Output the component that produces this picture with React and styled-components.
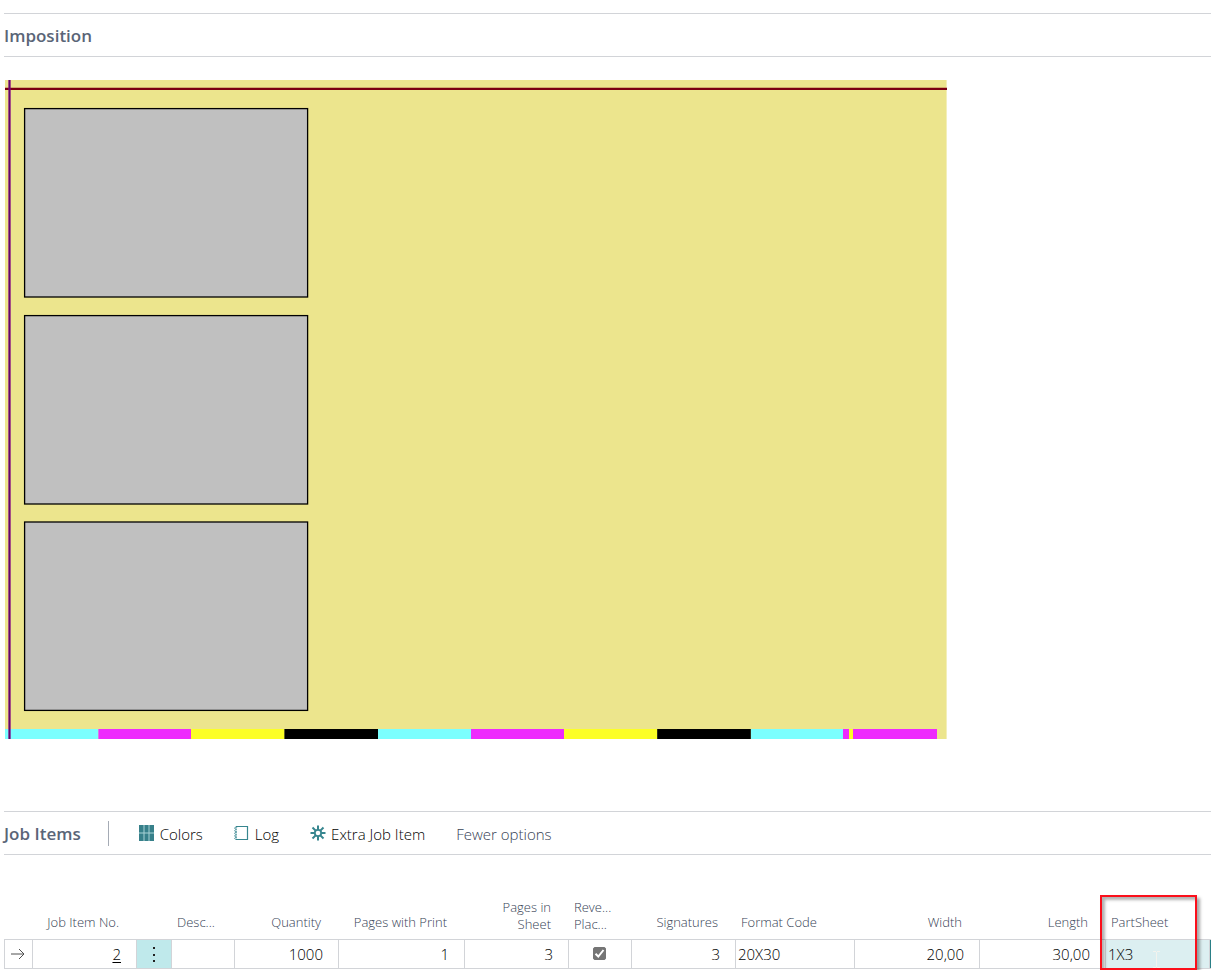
import { useState } from 'react';
import styled, { createGlobalStyle } from 'styled-components';

const GlobalStyle = createGlobalStyle`
  body {
    margin: 0;
    background-color: #ffffff;
    color: #000000;
    font-family: 'Segoe UI', 'Open Sans', 'Noto Sans', sans-serif;
    font-size: 15px;
    font-weight: 300;
    overflow-x: hidden;
  }

  * {
    box-sizing: border-box;
  }
`;

const Page = styled.main`
  padding: 13px 0 0 4px;
`;

const Section = styled.section`
  margin-bottom: ${(props) => props.$space || 0}px;
`;

const SectionHeader = styled.header`
  display: flex;
  align-items: center;
  height: 44px;
  border-top: 1px solid #d2d4d8;
  border-bottom: 1px solid #d2d4d8;
`;

const Title = styled.h2`
  margin: 0;
  padding-top: 2px;
  color: #5a6577;
  font-size: 17px;
  font-weight: 600;
  line-height: 24px;
`;

const Divider = styled.div`
  width: 1px;
  height: 25px;
  margin: 0 30px 0 27px;
  background-color: #a5abb5;
`;

const Actions = styled.div`
  display: flex;
  align-items: center;
  gap: 31px;
`;

const ActionButton = styled.button`
  display: flex;
  align-items: center;
  gap: 5px;
  padding: 2px 0 0;
  border: none;
  background: none;
  color: ${(props) => (props.$muted ? '#364255' : '#000000')};
  font: inherit;
  line-height: 20px;
  cursor: pointer;

  > svg {
    margin-bottom: 2px;
  }
`;

const Sheet = styled.svg`
  display: block;
  width: 942px;
  max-width: 100%;
  height: auto;
  margin: 23px 0 0 1px;
`;

const TableWrap = styled.div`
  padding: 40px 0 1px;
`;

const Table = styled.table`
  width: 100%;
  table-layout: fixed;
  border-collapse: separate;
  border-spacing: 0;
`;

const HeadCell = styled.th`
  position: relative;
  height: 44px;
  padding: 0 18px 6px 5px;
  color: #364255;
  font-size: 13px;
  font-weight: 300;
  line-height: ${(props) => (props.$twoLines ? 17 : 22)}px;
  text-align: ${(props) => (props.$left ? 'left' : 'right')};
  vertical-align: bottom;
  white-space: nowrap;
`;

const Cell = styled.td`
  height: 30px;
  padding: ${(props) => (props.$left ? '0 0 0 2px' : '0 15px 0 0')};
  border: 1px solid #d2d4d8;
  border-left-width: ${(props) => (props.$first ? 1 : 0)}px;
  background-color: ${(props) => props.$fill || 'transparent'};
  line-height: 20px;
  text-align: ${(props) => (props.$left ? 'left' : 'right')};
`;

const IconCell = styled(Cell)`
  padding: 0 1px 1px 0;
  text-align: center;

  > svg {
    display: block;
    margin: 0 auto;
  }
`;

const ItemLink = styled.a`
  color: #000000;
  text-decoration: underline;
  text-underline-offset: 2px;
`;

const RowButton = styled.button`
  display: flex;
  align-items: center;
  justify-content: center;
  width: 100%;
  height: 27px;
  padding: 0;
  border: none;
  background: none;
  cursor: pointer;
`;

const CheckBox = styled.input`
  appearance: none;
  display: block;
  width: 13px;
  height: 13px;
  margin: 0 auto;
  border: 1px solid #757575;
  border-radius: 2px;

  &:checked {
    background: #757575;
  }
`;

const CheckLabel = styled.label`
  display: grid;
  place-items: center;

  > * {
    grid-area: 1 / 1;
  }

  > svg {
    pointer-events: none;
  }
`;

const FieldBox = styled.div`
  position: relative;
  height: 28px;

  > svg {
    position: absolute;
    top: 11px;
    left: 44px;
  }
`;

const Field = styled.input`
  display: block;
  width: 100%;
  height: 28px;
  padding: 0;
  border: none;
  outline: none;
  background: transparent;
  color: #000000;
  font: inherit;
`;

const FocusBar = styled.td`
  border: 1px solid #d2d4d8;
  border-width: 1px 0;
  padding: 0;
  background-color: #2a7f86;
`;

const Marker = styled.div`
  position: absolute;
  z-index: 1;
  right: 13px;
  bottom: -31px;
  left: -6px;
  height: 75px;
  border: 2px solid #fb0f1b;
  box-shadow: 3px 3px 3px rgba(0, 0, 0, 0.35), inset 3px 3px 3px rgba(0, 0, 0, 0.3);
  pointer-events: none;
`;

const columnWidths = [29, 104, 35, 63, 104, 126, 104, 63, 104, 119, 125, 126, 104, 1];

const pages = [28, 235, 441.4];

const colorBar = [
  { x: 0, width: 93.4, fill: '#7bfffe' },
  { x: 93.4, width: 92.6, fill: '#ee2afd' },
  { x: 186, width: 93.4, fill: '#fcff26' },
  { x: 279.4, width: 93.6, fill: '#000000' },
  { x: 373, width: 93, fill: '#7bfffe' },
  { x: 466, width: 93, fill: '#ee2afd' },
  { x: 559, width: 93.2, fill: '#fcff26' },
  { x: 652.2, width: 93.6, fill: '#000000' },
  { x: 746, width: 92, fill: '#7bfffe' },
  { x: 838, width: 6, fill: '#ee2afd' },
  { x: 844, width: 4, fill: '#fcff26' },
  { x: 848, width: 84, fill: '#ee2afd' },
];

const ColorsIcon = () => (
  <svg width="16" height="16" viewBox="0 0 16 16" aria-hidden="true">
    <path d="M0 0h15v16H0z" fill="#37808a" />
    <path d="M5 0v16M10 0v16M0 8h15" stroke="#a9d3d6" fill="none" />
  </svg>
);

const LogIcon = () => (
  <svg width="16" height="16" viewBox="0 0 16 16" fill="none" stroke="#37868f" aria-hidden="true">
    <path d="M2.500 2V1.500h11v13h-11V14" strokeWidth="1.200" />
    <path d="M3.200 2.200H1.300q-1.300 1 0 1.800h1.500M2.800 4.800H1.300q-1.300 1 0 1.800h1.500M2.800 7.400H1.300q-1.300 1 0 1.800h1.500M2.800 10H1.300q-1.300 1 0 1.800h1.500M2.800 12.600H1.300q-1.300 1 0 1.600h1.500" strokeWidth="0.900" />
  </svg>
);

const ExtraIcon = () => (
  <svg width="16" height="16" viewBox="0 0 16 16" fill="none" stroke="#37868f" aria-hidden="true">
    <circle cx="8" cy="8" r="3.200" strokeWidth="1.800" />
    <path
      d="M8 .5V5M8 11v4.500M.5 8H5M11 8h4.500M2.500 2.500l3.400 3.400M10.100 10.100l3.400 3.400M13.500 2.500l-3.400 3.400M5.900 10.100l-3.400 3.400"
      strokeWidth="2"
    />
  </svg>
);

const ImpositionSheet = () => (
  <Sheet viewBox="0 0 942 659" role="img" aria-label="Imposition">
    <rect width="941.600" height="659" fill="#ece58d" />
    {colorBar.map((bar) => (
      <rect key={bar.x} x={bar.x} y="649" width={bar.width} height="10" fill={bar.fill} />
    ))}
    {pages.map((y) => (
      <rect key={y} x="19.600" y={y + 0.6} width="283" height="188.400" fill="#c0c0c0" stroke="#000000" strokeWidth="1.300" />
    ))}
    <path d="M0 8.900h942" stroke="#7a0010" strokeWidth="2.200" />
    <path d="M4.500 0v659" stroke="#800080" strokeOpacity="0.65" strokeWidth="3" />
    <path d="M4.500 0v659" stroke="#5c0a68" strokeWidth="1" />
  </Sheet>
);

const App = () => {
  const [reverse, setReverse] = useState(true);
  const [partSheet, setPartSheet] = useState('1X3');

  return (
    <>
      <GlobalStyle />
      <Page>
        <Section $space={72}>
          <SectionHeader>
            <Title>Imposition</Title>
          </SectionHeader>
          <ImpositionSheet />
        </Section>

        <Section>
          <SectionHeader>
            <Title>Job Items</Title>
            <Divider />
            <Actions>
              <ActionButton type="button"><ColorsIcon />Colors</ActionButton>
              <ActionButton type="button"><LogIcon />Log</ActionButton>
              <ActionButton type="button"><ExtraIcon />Extra Job Item</ActionButton>
              <ActionButton type="button" $muted>Fewer options</ActionButton>
            </Actions>
          </SectionHeader>

          <TableWrap>
            <Table>
              <colgroup>
                {columnWidths.map((width, i) => (
                  <col key={i} width={width} />
                ))}
              </colgroup>
              <thead>
                <tr>
                  <HeadCell as="td" />
                  <HeadCell>Job Item No.</HeadCell>
                  <HeadCell as="td" />
                  <HeadCell $left>Desc...</HeadCell>
                  <HeadCell>Quantity</HeadCell>
                  <HeadCell>Pages with Print</HeadCell>
                  <HeadCell $twoLines>Pages in<br />Sheet</HeadCell>
                  <HeadCell $left $twoLines>Reve...<br />Plac...</HeadCell>
                  <HeadCell>Signatures</HeadCell>
                  <HeadCell $left>Format Code</HeadCell>
                  <HeadCell>Width</HeadCell>
                  <HeadCell>Length</HeadCell>
                  <HeadCell $left>
                    <label htmlFor="part-sheet">PartSheet</label>
                    <Marker />
                  </HeadCell>
                  <td />
                </tr>
              </thead>
              <tbody>
                <tr>
                  <IconCell $first>
                    <svg width="14" height="14" viewBox="0 0 14 14" fill="none" stroke="#505050" aria-hidden="true">
                      <path d="M0 7h13M8 2l5 5-5 5" />
                    </svg>
                  </IconCell>
                  <Cell><ItemLink href="#item-2">2</ItemLink></Cell>
                  <IconCell $fill="#bfe9eb">
                    <RowButton type="button" aria-label="Show more options">
                      <svg width="4" height="16" viewBox="0 0 4 16" fill="#212121" aria-hidden="true">
                        <path d="M1 1h2v2H1zM1 8h2v2H1zM1 14h2v2H1z" />
                      </svg>
                    </RowButton>
                  </IconCell>
                  <Cell $left />
                  <Cell>1000</Cell>
                  <Cell>1</Cell>
                  <Cell>3</Cell>
                  <IconCell>
                    <CheckLabel>
                      <CheckBox
                        type="checkbox"
                        aria-label="Reverse Placement"
                        checked={reverse}
                        onChange={() => setReverse(!reverse)}
                      />
                      {reverse && (
                        <svg width="13" height="13" viewBox="0 0 13 13" fill="none" stroke="#ffffff" strokeWidth="2" aria-hidden="true">
                          <path d="M2.500 6.800l2.800 2.700 5.200-6.500" />
                        </svg>
                      )}
                    </CheckLabel>
                  </IconCell>
                  <Cell>3</Cell>
                  <Cell $left>20X30</Cell>
                  <Cell>20,00</Cell>
                  <Cell>30,00</Cell>
                  <Cell $left $fill="#dceff1">
                    <FieldBox>
                      <Field
                        id="part-sheet"
                        value={partSheet}
                        onChange={(e) => setPartSheet(e.target.value)}
                      />
                      <svg width="9" height="17" viewBox="0 0 9 17" fill="none" stroke="#f3f3ee" aria-hidden="true">
                        <path d="M1 .5h3M5 .5h3M4.500 1v15M1 16.500h3M5 16.500h3" />
                      </svg>
                    </FieldBox>
                  </Cell>
                  <FocusBar />
                </tr>
              </tbody>
            </Table>
          </TableWrap>
        </Section>
      </Page>
    </>
  );
};

export default App;
